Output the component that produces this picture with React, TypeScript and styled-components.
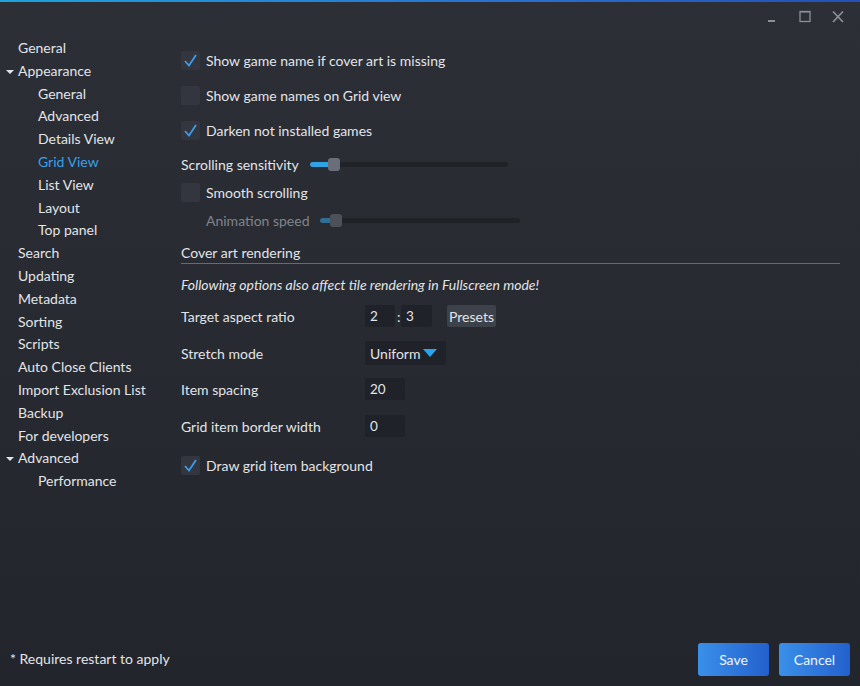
import React from 'react';
import styled, { createGlobalStyle } from 'styled-components';

const GlobalStyle = createGlobalStyle`
    html, body {
        margin: 0;
        padding: 0;
        background: #24272d;
    }
    * {
        box-sizing: border-box;
    }
`;

const Window = styled.div`
    width: 860px;
    height: 686px;
    display: flex;
    flex-direction: column;
    background: linear-gradient(180deg, #2c2f36 0%, #272a31 50%, #22252b 100%);
    border-top: 2px solid;
    border-image: linear-gradient(90deg, #1ea3dc, #2a6fd0 60%, #2350b8) 1;
    font-family: Lato, 'Open Sans', sans-serif;
    font-size: 14px;
    color: #e2e4e8;
    overflow: hidden;
`;

const TitleBar = styled.div`
    height: 30px;
    display: flex;
    justify-content: flex-end;
    align-items: center;
    padding-right: 12px;
    gap: 13px;
`;

const WinButton = styled.div`
    width: 20px;
    height: 20px;
    display: flex;
    align-items: center;
    justify-content: center;
`;

const Body = styled.div`
    flex: 1;
    display: flex;
    min-height: 0;
`;

const Sidebar = styled.div`
    width: 170px;
    padding-top: 5px;
    display: flex;
    flex-direction: column;
`;

const NavItem = styled.div<{ $level: number; $active?: boolean }>`
    height: 22.8px;
    line-height: 22.8px;
    padding-left: ${(p) => (p.$level === 0 ? 18 : 38)}px;
    color: ${(p) => (p.$active ? '#3aa0e8' : '#e2e4e8')};
    position: relative;
    white-space: nowrap;
`;

const Caret = styled.span`
    position: absolute;
    left: 6px;
    top: 10px;
    width: 0;
    height: 0;
    border-left: 4px solid transparent;
    border-right: 4px solid transparent;
    border-top: 4px solid #e2e4e8;
`;

const Content = styled.div`
    flex: 1;
    padding: 18px 20px 0 11px;
    display: flex;
    flex-direction: column;
`;

const Row = styled.div<{ $h: number; $dim?: boolean }>`
    height: ${(p) => p.$h}px;
    flex-shrink: 0;
    display: flex;
    align-items: center;
    color: ${(p) => (p.$dim ? '#80848c' : '#e2e4e8')};
`;

const Spacer = styled.div<{ $h: number }>`
    height: ${(p) => p.$h}px;
    flex-shrink: 0;
`;

const Box = styled.div`
    width: 19px;
    height: 19px;
    border-radius: 2px;
    background: #33363e;
    margin-right: 6px;
    display: flex;
    align-items: center;
    justify-content: center;
`;

const Indent = styled.span`
    width: 25px;
`;

const Track = styled.div<{ $w: number; $dim?: boolean }>`
    position: relative;
    width: ${(p) => p.$w}px;
    height: 5px;
    border-radius: 3px;
    background: #1f2227;
    margin-left: ${(p) => (p.$dim ? 10 : 11)}px;
`;

const Fill = styled.div<{ $dim?: boolean }>`
    height: 100%;
    border-radius: 3px;
    background: ${(p) => (p.$dim ? '#2f6e96' : '#2fa3e6')};
`;

const Thumb = styled.div<{ $dim?: boolean }>`
    position: absolute;
    top: -4px;
    width: 12px;
    height: 13px;
    border-radius: 3px;
    background: ${(p) => (p.$dim ? '#4c5058' : '#6a6e78')};
`;

const SectionTitle = styled.div`
    height: 34px;
    flex-shrink: 0;
    display: flex;
    align-items: flex-end;
    padding-bottom: 2px;
    border-bottom: 1px solid #676a72;
`;

const Note = styled.div`
    height: 40px;
    flex-shrink: 0;
    display: flex;
    align-items: center;
    font-style: italic;
`;

const Label = styled.div`
    width: 184px;
`;

const Input = styled.div<{ $w: number }>`
    width: ${(p) => p.$w}px;
    height: 22px;
    background: #1f2228;
    border-radius: 2px;
    padding-left: 5px;
    display: flex;
    align-items: center;
    font-size: 13.5px;
`;

const Colon = styled.span`
    width: 4px;
    margin-left: 2px;
`;

const PresetButton = styled.div`
    margin-left: 15px;
    height: 22px;
    padding: 0 2px;
    background: #3d414a;
    border-radius: 2px;
    display: flex;
    align-items: center;
`;

const Dropdown = styled.div`
    width: 81px;
    height: 24px;
    background: #1f2228;
    border-radius: 2px;
    padding-left: 5px;
    display: flex;
    align-items: center;
    gap: 3px;
`;

const Footer = styled.div`
    height: 54px;
    display: flex;
    align-items: flex-start;
    padding: 11px 10px 0 10px;
`;

const FooterNote = styled.div`
    flex: 1;
    padding-top: 7px;
`;

const Button = styled.div`
    width: 71px;
    height: 33px;
    margin-left: 10px;
    border-radius: 3px;
    background: linear-gradient(90deg, #3a90ea, #2360cc);
    display: flex;
    align-items: center;
    justify-content: center;
    color: #f0f4fa;
`;

const Check = () => (
    <svg width="15" height="15" viewBox="0 0 15 15">
        <path d="M2 8 L6 12.5 L13 2" fill="none" stroke="#3b9cec" strokeWidth="1.8" />
    </svg>
);

const CheckRow = ({ checked, label, h }: { checked: boolean; label: string; h: number }) => (
    <Row $h={h}>
        <Box>{checked && <Check />}</Box>
        {label}
    </Row>
);

const nav: { label: string; level: number; caret?: boolean; active?: boolean }[] = [
    { label: 'General', level: 0 },
    { label: 'Appearance', level: 0, caret: true },
    { label: 'General', level: 1 },
    { label: 'Advanced', level: 1 },
    { label: 'Details View', level: 1 },
    { label: 'Grid View', level: 1, active: true },
    { label: 'List View', level: 1 },
    { label: 'Layout', level: 1 },
    { label: 'Top panel', level: 1 },
    { label: 'Search', level: 0 },
    { label: 'Updating', level: 0 },
    { label: 'Metadata', level: 0 },
    { label: 'Sorting', level: 0 },
    { label: 'Scripts', level: 0 },
    { label: 'Auto Close Clients', level: 0 },
    { label: 'Import Exclusion List', level: 0 },
    { label: 'Backup', level: 0 },
    { label: 'For developers', level: 0 },
    { label: 'Advanced', level: 0, caret: true },
    { label: 'Performance', level: 1 },
];

const App = () => {
    return (
        <>
            <GlobalStyle />
            <Window>
                <TitleBar>
                    <WinButton>
                        <svg width="12" height="12" viewBox="0 0 12 12">
                            <rect x="2" y="9" width="7" height="2" fill="#8c8f96" />
                        </svg>
                    </WinButton>
                    <WinButton>
                        <svg width="14" height="14" viewBox="0 0 14 14">
                            <rect x="2" y="1.5" width="10" height="10" fill="none" stroke="#8c8f96" strokeWidth="1.3" />
                            <rect x="2" y="1.5" width="10" height="1" fill="#8c8f96" />
                        </svg>
                    </WinButton>
                    <WinButton>
                        <svg width="14" height="14" viewBox="0 0 14 14">
                            <path d="M2 1.5 L12 12 M12 1.5 L2 12" stroke="#8c8f96" strokeWidth="1.8" />
                        </svg>
                    </WinButton>
                </TitleBar>
                <Body>
                    <Sidebar>
                        {nav.map((n, i) => (
                            <NavItem key={i} $level={n.level} $active={n.active}>
                                {n.caret && <Caret />}
                                {n.label}
                            </NavItem>
                        ))}
                    </Sidebar>
                    <Content>
                        <CheckRow h={20} checked label="Show game name if cover art is missing" />
                        <Spacer $h={15} />
                        <CheckRow h={20} checked={false} label="Show game names on Grid view" />
                        <Spacer $h={15} />
                        <CheckRow h={20} checked label="Darken not installed games" />
                        <Spacer $h={14} />
                        <Row $h={20}>
                            Scrolling sensitivity
                            <Track $w={198}>
                                <Fill style={{ width: 24 }} />
                                <Thumb style={{ left: 18 }} />
                            </Track>
                        </Row>
                        <Spacer $h={7} />
                        <Row $h={22}>
                            <Box />
                            Smooth scrolling
                        </Row>
                        <Spacer $h={7} />
                        <Row $h={20} $dim>
                            <Indent />
                            Animation speed
                            <Track $w={200} $dim>
                                <Fill $dim style={{ width: 15 }} />
                                <Thumb $dim style={{ left: 10 }} />
                            </Track>
                        </Row>
                        <SectionTitle>Cover art rendering</SectionTitle>
                        <Note>Following options also affect tile rendering in Fullscreen mode!</Note>
                        <Row $h={24}>
                            <Label>Target aspect ratio</Label>
                            <Input $w={30}>2</Input>
                            <Colon>:</Colon>
                            <Input $w={31}>3</Input>
                            <PresetButton>Presets</PresetButton>
                        </Row>
                        <Row $h={50}>
                            <Label>Stretch mode</Label>
                            <Dropdown>
                                Uniform
                                <svg width="14" height="10" viewBox="0 0 14 10">
                                    <path d="M0 1 L14 1 L7 9 Z" fill="#2aa4ec" />
                                </svg>
                            </Dropdown>
                        </Row>
                        <Row $h={22}>
                            <Label>Item spacing</Label>
                            <Input $w={40}>20</Input>
                        </Row>
                        <Row $h={52}>
                            <Label>Grid item border width</Label>
                            <Input $w={40}>0</Input>
                        </Row>
                        <CheckRow h={26} checked label="Draw grid item background" />
                    </Content>
                </Body>
                <Footer>
                    <FooterNote>* Requires restart to apply</FooterNote>
                    <Button>Save</Button>
                    <Button>Cancel</Button>
                </Footer>
            </Window>
        </>
    );
};

export default App;
